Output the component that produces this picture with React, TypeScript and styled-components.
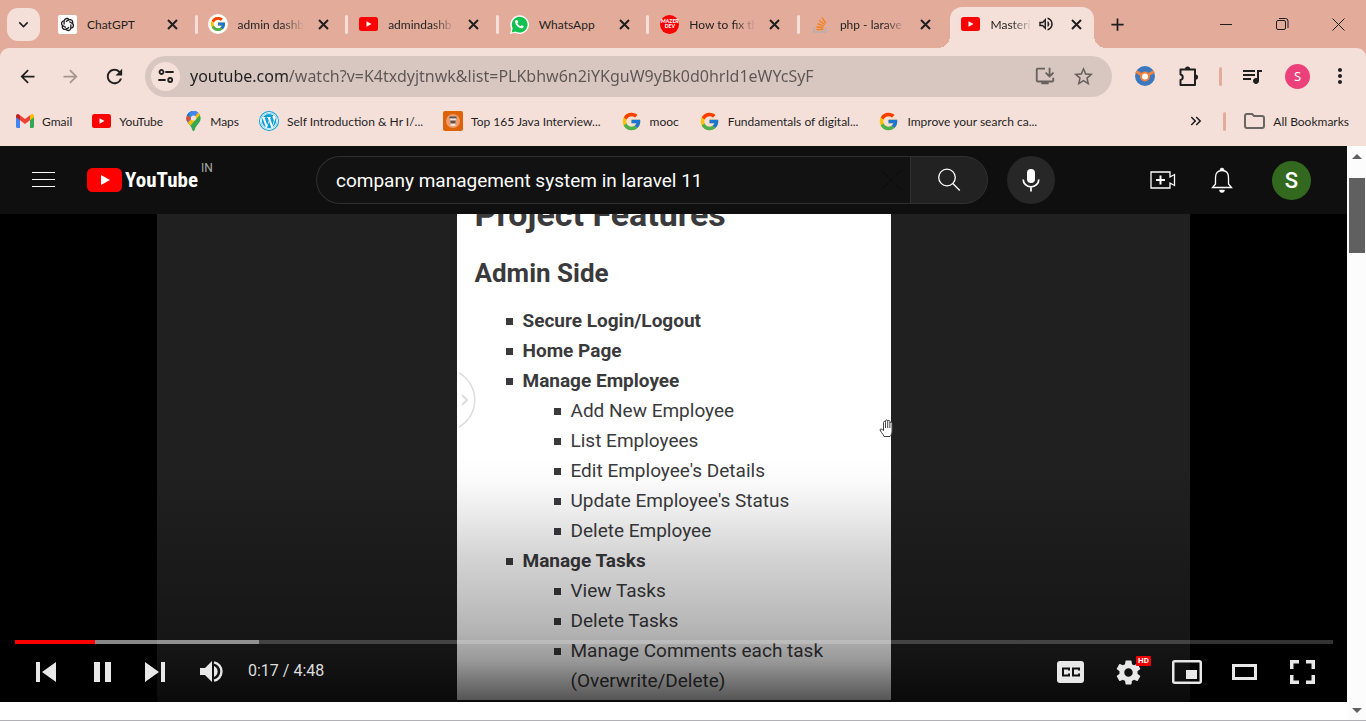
import React from 'react';
import styled, { createGlobalStyle, css } from 'styled-components';
import {
  MdArrowBack, MdArrowForward, MdRefresh, MdStarBorder, MdQueueMusic, MdMoreVert,
  MdKeyboardDoubleArrowRight, MdAdd, MdKeyboardArrowDown,
  MdOutlineInstallDesktop, MdOutlineVolumeUp,
} from 'react-icons/md';
import { FcGoogle } from 'react-icons/fc';
import { FaWordpress } from 'react-icons/fa';
import { RiOpenaiLine } from 'react-icons/ri';

const Global = createGlobalStyle`
  *, *::before, *::after { box-sizing: border-box; }
  body { margin: 0; background: #fff; font-family: Roboto, "Liberation Sans", sans-serif; }
  button { font: inherit; color: inherit; background: none; border: 0; padding: 0; margin: 0; cursor: pointer; }
  svg { display: block; flex: none; }
`;

const ui = css`font-family: "Noto Sans", "Open Sans", sans-serif;`;
const smallUi = css`
  font-family: Lato, "Open Sans", sans-serif;
  font-size: 12px;
`;
const center = css`display: flex; align-items: center; justify-content: center;`;

const Browser = styled.div`
  min-height: 100vh;
  display: flex;
  flex-direction: column;
  border-bottom: 1px solid #b1b1b5;
`;

/* ---------- tab strip ---------- */
const TabStrip = styled.header`
  ${smallUi}
  display: flex;
  align-items: center;
  height: 48px;
  padding-left: 7px;
  background: #e3ac9a;
  color: #1f1f1f;
`;
const TabSearch = styled.button`
  ${center}
  width: 33px;
  height: 33px;
  flex: none;
  margin-right: 5px;
  border-radius: 11px;
  background: #f5e0d9;
`;
const TabList = styled.nav`
  display: flex;
  flex: 0 1 1054px;
  min-width: 0;
  align-self: stretch;
`;
const Tab = styled.div<{ $divided?: boolean }>`
  position: relative;
  display: flex;
  align-items: center;
  gap: 10px;
  flex: 1 1 0;
  min-width: 0;
  padding: 0 14px 0 13px;
  ${p => p.$divided && css`
    &::after {
      content: "";
      position: absolute;
      right: -2px;
      top: 15px;
      width: 3px;
      height: 19px;
      border-radius: 2px;
      background: #f5e0d9;
    }
  `}
`;
const ActiveShape = styled.span`
  position: absolute;
  inset: 7px 5px 0 2px;
  border-radius: 12px 12px 0 0;
  background: #f5e0d9;
  &::before, &::after {
    content: "";
    position: absolute;
    bottom: 0;
    width: 12px;
    height: 12px;
  }
  &::before { right: 100%; background: radial-gradient(circle at 0 0, transparent 12px, #f5e0d9 12px); }
  &::after { left: 100%; background: radial-gradient(circle at 100% 0, transparent 12px, #f5e0d9 12px); }
`;
const TabIcon = styled.span`
  ${center}
  position: relative;
  width: 19px;
  height: 19px;
  flex: none;
`;
const TabTitle = styled.span<{ $fade?: boolean }>`
  position: relative;
  flex: 1 1 0;
  min-width: 0;
  overflow: hidden;
  white-space: nowrap;
  ${p => p.$fade && css`mask-image: linear-gradient(to right, #000 calc(100% - 22px), transparent);`}
`;
const TabButton = styled.button`
  ${center}
  position: relative;
  flex: none;
  width: 18px;
  height: 18px;
`;
const MuteButton = styled(TabButton)`
  margin: 0 2px 0 -6px;
`;
const NewTab = styled.button`
  ${center}
  width: 36px;
  height: 36px;
  flex: none;
`;
const WindowButtons = styled.div`
  display: flex;
  margin-left: auto;
`;
const WindowButton = styled.button`
  ${center}
  width: 56px;
  height: 48px;
`;

/* ---------- toolbar ---------- */
const ToolbarWrap = styled.div`background: #e3ac9a;`;
const Toolbar = styled.div`
  ${ui}
  display: flex;
  align-items: center;
  height: 56px;
  padding: 0 13px;
  border-radius: 9px 9px 0 0;
  background: #f5e0d9;
  color: #1f1f1f;
`;
const ToolButton = styled.button<{ $w?: number; $dim?: boolean }>`
  ${center}
  width: ${p => p.$w ?? 43}px;
  height: 36px;
  flex: none;
  color: ${p => (p.$dim ? '#a39691' : '#1f1f1f')};
`;
const Omnibox = styled.div`
  display: flex;
  align-items: center;
  flex: 1;
  min-width: 0;
  height: 41px;
  margin: 0 14px 0 16px;
  padding: 0 9px 0 6px;
  border-radius: 21px;
  background: #d8c6c0;
`;
const SiteInfo = styled.button`
  ${center}
  width: 29px;
  height: 29px;
  border-radius: 50%;
  background: #f5e0d9;
`;
const Address = styled.input`
  ${ui}
  flex: 1;
  min-width: 0;
  height: 26px;
  margin-left: 10px;
  padding: 0;
  border: 0;
  outline: 0;
  font-size: 16px;
  background: linear-gradient(to right, #1f1f1f 98px, #5e5654 98px);
  background-clip: text;
  -webkit-text-fill-color: transparent;
`;
const Divider = styled.span<{ $space: number }>`
  width: 3px;
  height: 19px;
  flex: none;
  margin: 0 ${p => p.$space}px;
  border-radius: 2px;
  background: #e3ac9a;
`;
const Profile = styled.button`
  ${center}
  width: 25px;
  height: 25px;
  flex: none;
  margin: 0 17px 0 9px;
  border-radius: 50%;
  background: #ec407a;
  color: #fff;
  font-size: 13px;
`;

const Bookmarks = styled.nav`
  ${smallUi}
  display: flex;
  align-items: center;
  gap: 20px;
  height: 42px;
  padding: 0 17px 8px 16px;
  background: #f5e0d9;
  color: #1f1f1f;
  white-space: nowrap;
`;
const Bookmark = styled.a`
  display: flex;
  align-items: center;
  gap: 8px;
  color: inherit;
  text-decoration: none;
`;
const BookmarksEnd = styled.div`
  display: flex;
  align-items: center;
  margin-left: auto;
`;

/* ---------- page ---------- */
const Viewport = styled.div`
  display: flex;
  flex: 1;
`;
const Page = styled.main`
  flex: 1;
  min-width: 0;
  background: #fff;
`;
const Scrollbar = styled.div`
  display: flex;
  flex-direction: column;
  align-items: center;
  width: 19px;
  padding: 8px 1px 7px 2px;
  background: #fcfcfc;
`;
const Thumb = styled.span`
  width: 16px;
  height: 75px;
  margin: 19px 0 auto;
  background: #606060;
`;
const Masthead = styled.header`
  display: flex;
  align-items: center;
  justify-content: space-between;
  height: 68px;
  padding: 0 36px 0 32px;
  background: #0f0f0f;
  color: #fff;
`;
const MastStart = styled.div`
  display: flex;
  align-items: center;
  gap: 32px;
  width: 189px;
`;
const Logo = styled.a`
  display: flex;
  align-items: center;
  gap: 3px;
  color: #fff;
  text-decoration: none;
`;
const Wordmark = styled.span`
  font-family: "Liberation Sans Narrow", "Roboto Condensed", "Open Sans Condensed", Roboto, sans-serif;
  font-weight: 700;
  font-size: 21px;
  line-height: 26px;
`;
const Country = styled.sup`
  align-self: flex-start;
  margin-top: -6px;
  font-size: 12px;
  line-height: 14px;
  color: #aaa;
`;
const MastCenter = styled.div`
  display: flex;
  flex: 0 1 739px;
  gap: 19px;
`;
const SearchForm = styled.form`
  display: flex;
  flex: 1;
  min-width: 0;
`;
const SearchBox = styled.label`
  display: flex;
  align-items: center;
  flex: 1;
  min-width: 0;
  height: 48px;
  padding: 0 8px 0 19px;
  border: 1px solid #303030;
  border-right: 0;
  border-radius: 24px 0 0 24px;
  background: #121212;
`;
const SearchInput = styled.input`
  flex: 1;
  min-width: 0;
  padding: 0;
  border: 0;
  outline: 0;
  background: none;
  color: #fff;
  font-family: Roboto, sans-serif;
  font-size: 19px;
`;
const SearchButton = styled.button`
  ${center}
  width: 78px;
  height: 48px;
  border: 1px solid #303030;
  border-radius: 0 24px 24px 0;
  background: #222;
`;
const Mic = styled.button`
  ${center}
  width: 48px;
  height: 48px;
  border-radius: 50%;
  background: #272727;
`;
const MastEnd = styled.div`
  display: flex;
  align-items: center;
  justify-content: space-between;
  width: 161px;
`;
const Bell = styled.button`padding-right: 4px;`;
const Avatar = styled.button`
  ${center}
  width: 39px;
  height: 39px;
  border-radius: 50%;
  background: #33691e;
  font-size: 22px;
  font-weight: 500;
`;

/* ---------- player ---------- */
const Player = styled.section`
  position: relative;
  overflow: hidden;
  display: flex;
  justify-content: center;
  background: #000;
`;
const Video = styled.div`
  display: flex;
  justify-content: center;
  width: 1033px;
  padding-bottom: 2px;
  background: #202020;
`;
const Slide = styled.article`
  position: relative;
  width: 434px;
  padding: 0 18px 4px;
  background: #fff;
  color: #3a3a3c;
`;
const SlideTitle = styled.h1`
  margin: -19px 0 24px;
  font-size: 34px;
  line-height: 38px;
  font-weight: 700;
`;
const SlideHeading = styled.h2`
  margin: 0 0 17px;
  font-size: 26px;
  line-height: 32px;
  font-weight: 700;
`;
const List = styled.ul<{ $nested?: boolean }>`
  margin: 0;
  padding: 0 0 0 ${p => (p.$nested ? 48 : 31)}px;
  list-style: none;
  font-size: 19px;
  line-height: 30px;
  white-space: nowrap;
  font-weight: ${p => (p.$nested ? 400 : 700)};
`;
const Item = styled.div`
  display: flex;
  gap: 10px;
  &::before {
    content: "";
    width: 7px;
    height: 7px;
    flex: none;
    margin-top: 12px;
    background: currentColor;
  }
`;
const ItemText = styled.span`white-space: pre-line;`;
const Drawer = styled.button`
  position: absolute;
  left: 2px;
  top: 156px;
  width: 20px;
  height: 60px;
`;
const Hand = styled.svg`
  position: absolute;
  right: -5px;
  top: 205px;
`;
const Shade = styled.div`
  position: absolute;
  inset: auto 0 0;
  height: 244px;
  background: linear-gradient(to bottom, rgba(0,0,0,0) 0%, rgba(0,0,0,.02) 10%, rgba(0,0,0,.09) 25%, rgba(0,0,0,.17) 40%, rgba(0,0,0,.24) 58%, rgba(0,0,0,.3) 72%, rgba(0,0,0,.4) 83%, rgba(0,0,0,.68) 100%);
`;
const Controls = styled.div`
  position: absolute;
  inset: auto 14px 0 15px;
  color: #e8e8e8;
`;
const Track = styled.div`
  display: flex;
  height: 4px;
  background: rgba(255,255,255,.2);
`;
const Segment = styled.span<{ $color: string }>`
  background: ${p => p.$color};
`;
const ControlRow = styled.div`
  display: flex;
  align-items: center;
  height: 58px;
  padding: 0 1px 2px 3px;
`;
const ControlButton = styled.button<{ $w: number }>`
  ${center}
  position: relative;
  width: ${p => p.$w}px;
  height: 52px;
`;
const Time = styled.span`
  margin: 0 auto 3px 6px;
  font-size: 16px;
  line-height: 20px;
  color: #ddd;
`;
const HD = styled.span`
  position: absolute;
  left: 37px;
  top: 10px;
  padding: 0 2px;
  border-radius: 1px;
  background: #e00;
  color: #fff;
  font-size: 8px;
  line-height: 10px;
  font-weight: 700;
`;

/* ---------- drawings ---------- */
const YtIcon = ({ w = 19 }: { w?: number }) => (
  <svg width={w} height={w * 14 / 19} viewBox="0 0 38 28">
    <rect width="38" height="28" rx="5" fill="#f00" />
    <path d="M15 8.500v11l10-5.500z" fill="#fff" />
  </svg>
);
const OpenAi = () => (
  <svg width="19" height="19" viewBox="0 0 19 19">
    <rect width="19" height="19" rx="2" fill="#fff" />
    <g transform="translate(1.500 1.500)"><RiOpenaiLine size={16} color="#222" /></g>
  </svg>
);
const GoogleDisc = () => (
  <svg width="20" height="20" viewBox="0 0 20 20"><circle cx="10" cy="10" r="10" fill="#fff" /><g transform="translate(1.500 1.500)"><FcGoogle size={17} /></g></svg>
);
const WhatsApp = () => (
  <svg width="19" height="19" viewBox="0 0 19 19">
    <path d="M0 19l1.400-5A9.300 9.300 0 1 1 5 17.700z" fill="#fff" />
    <path d="M1.600 17.400l1.100-4A7.900 7.900 0 1 1 5.500 16.400z" fill="#12c150" />
    <path d="M6.200 5c-.7.3-1.300 1.200-1.100 2.300.5 2.800 3.300 5.700 6.300 6 1.100.1 2.300-.6 2.400-2l-2.100-1.100-1.100 1.100c-1.400-.5-2.500-1.600-3.200-3l.9-1L7.300 5z" fill="#fff" />
  </svg>
);
const MazerText = styled.span`
  ${center}
  flex-direction: column;
  width: 19px;
  height: 19px;
  border-radius: 50%;
  background: #f00;
  color: #fff;
  font-size: 5px;
  line-height: 5px;
  font-weight: 900;
`;
const Stack = () => (
  <svg width="15" height="17" viewBox="0 0 15 17" fill="none">
    <path d="M1 11v5h11.500v-5" stroke="#b5b0ae" strokeWidth="1.600" />
    <path d="M3.300 13.400h7M3.500 10.700l6.900 1M4.300 7.600l6.500 2.500M6.200 4.500l5.500 4.200M9 1.700l3.800 5.700" stroke="#f48024" strokeWidth="1.500" />
  </svg>
);
const TabClose = () => (
  <svg width="11" height="11" viewBox="0 0 11 11"><path d="M1 1l9 9M10 1l-9 9" stroke="#1f1f1f" strokeWidth="2" /></svg>
);
const Gmail = () => (
  <svg width="18" height="14" viewBox="0 0 18 14">
    <path d="M0 2v10.800c0 .7.500 1.200 1.200 1.200H4V5.500z" fill="#4285f4" />
    <path d="M18 2v10.800c0 .7-.5 1.200-1.200 1.200H14V5.500z" fill="#34a853" />
    <path d="M14 1.300v4.900l4-3V2c0-1.700-1.700-2.400-2.800-1.600z" fill="#fbbc04" />
    <path d="M4 6.200V1.300L9 5l5-3.700v4.900L9 10z" fill="#ea4335" />
    <path d="M0 2v1.200l4 3V1.300L2.800.4C1.700-.4 0 .3 0 2z" fill="#c5221f" />
  </svg>
);
const Maps = () => (
  <svg width="19" height="20" viewBox="-3 0 19 20">
    <defs><clipPath id="pin"><path d="M7.500 0A7.200 7.200 0 0 0 .3 7.200c0 4.600 4.400 6.300 5.900 11.300.3 1 .7 1.500 1.300 1.500s1-.5 1.300-1.500c1.500-5 5.900-6.700 5.900-11.300A7.200 7.200 0 0 0 7.500 0z" /></clipPath></defs>
    <g clipPath="url(#pin)">
      <rect width="15" height="20" fill="#34a853" />
      <path d="M-2 12L12 -3V3L2 15z" fill="#4285f4" />
      <path d="M0 0h7L2.500 6 0 4z" fill="#1a73e8" />
      <path d="M-1 2.500L5 7.500 0 12z" fill="#ea4335" />
      <path d="M1 12.500L14 -1v5L4 15z" fill="#fbbc04" />
      <path d="M5.500 0h8L8 6.500 3 3z" fill="#4285f4" />
    </g>
    <circle cx="7.500" cy="7" r="2.600" fill="#f5e0d9" />
  </svg>
);
const Wordpress = () => (
  <svg width="20" height="20" viewBox="0 0 20 20">
    <circle cx="10" cy="10" r="10" fill="#0a9fd8" /><circle cx="10" cy="10" r="9" fill="#fff" />
    <g transform="translate(1.500 1.500)"><FaWordpress size={17} color="#0a9fd8" /></g>
  </svg>
);
const JavaCup = () => (
  <svg width="20" height="20" viewBox="0 0 20 20">
    <rect width="20" height="20" rx="2" fill="#dd6208" /><circle cx="10" cy="10" r="7" fill="#ee9b6c" />
    <path d="M6.500 5.500h7v2h-7z" fill="#4c5660" /><path d="M7 7.500h6l-.7 7.500H7.700z" fill="#e9e4e0" /><path d="M7.200 9.500h5.600l-.3 3h-5z" fill="#6d4c41" />
  </svg>
);
const Tune = () => (
  <svg width="16" height="14" viewBox="0 0 16 14" fill="none" stroke="#1f1f1f" strokeWidth="1.800">
    <circle cx="3.500" cy="3" r="2" /><path d="M8 3h7M1 11h6" strokeLinecap="round" /><circle cx="12.200" cy="11" r="2" />
  </svg>
);
const Extension = () => (
  <svg width="20" height="20" viewBox="0 0 20 20">
    <circle cx="10" cy="10" r="10" fill="#3c78c0" /><path d="M1 5.500l6 3.500M19 5.500l-6 3.500" stroke="#f0823c" strokeWidth="3" />
    <circle cx="10" cy="10.500" r="5" fill="#f0823c" /><circle cx="10" cy="10.500" r="3" fill="#fff" />
  </svg>
);
const Puzzle = () => (
  <svg width="21" height="21" viewBox="0 0 21 21">
    <path d="M2.500 3.500h14.500v15.500h-14.500v-5c3-.5 3-5 0-5.500z" fill="none" stroke="#1f1f1f" strokeWidth="2" strokeLinejoin="round" />
    <path d="M7 3a2.600 2.600 0 0 1 5.200 0zM17.500 8.500a2.600 2.600 0 0 1 0 5.200z" fill="#1f1f1f" />
  </svg>
);
const Gear = () => (
  <svg width="29" height="29" viewBox="0 0 24 24" fill="currentColor">
    <path d="M19.430 12.980c.04-.32.07-.64.07-.98s-.03-.66-.07-.98l2.110-1.650c.19-.15.24-.42.12-.64l-2-3.460c-.12-.22-.39-.3-.61-.22l-2.490 1c-.52-.4-1.080-.73-1.690-.98l-.38-2.650C14.460 2.180 14.250 2 14 2h-4c-.25 0-.46.18-.49.42l-.38 2.650c-.61.25-1.170.59-1.690.98l-2.490-1c-.23-.09-.49 0-.61.22l-2 3.460c-.13.22-.07.49.12.64l2.110 1.650c-.04.32-.07.65-.07.98s.03.66.07.98l-2.110 1.650c-.19.15-.24.42-.12.64l2 3.460c.12.22.39.3.61.22l2.490-1c.52.4 1.080.73 1.690.98l.38 2.650c.03.24.24.42.49.42h4c.25 0 .46-.18.49-.42l.38-2.650c.61-.25 1.170-.59 1.690-.98l2.490 1c.23.09.49 0 .61-.22l2-3.460c.12-.22.07-.49-.12-.64l-2.110-1.650zM12 15.500c-1.930 0-3.500-1.570-3.500-3.500s1.570-3.500 3.500-3.500 3.500 1.570 3.500 3.500-1.570 3.500-3.500 3.500z" />
  </svg>
);

const tabs = [
  { icon: <OpenAi />, title: 'ChatGPT' },
  { icon: <GoogleDisc />, title: 'admin dashb', fade: true },
  { icon: <YtIcon />, title: 'admindashb', fade: true },
  { icon: <WhatsApp />, title: 'WhatsApp' },
  { icon: <MazerText><span>MAZER</span><span>DEV</span></MazerText>, title: 'How to fix th', fade: true },
  { icon: <Stack />, title: 'php - larave', fade: true },
  { icon: <YtIcon />, title: 'Masteri', fade: true, active: true },
];

const bookmarks = [
  { icon: <Gmail />, label: 'Gmail' },
  { icon: <YtIcon />, label: 'YouTube' },
  { icon: <Maps />, label: 'Maps' },
  { icon: <Wordpress />, label: 'Self Introduction & Hr I/...' },
  { icon: <JavaCup />, label: 'Top 165 Java Interview...' },
  { icon: <FcGoogle size={21} />, label: 'mooc' },
  { icon: <FcGoogle size={21} />, label: 'Fundamentals of digital...' },
  { icon: <FcGoogle size={21} />, label: 'Improve your search ca...' },
];

const features: { name: string; sub?: string[] }[] = [
  { name: 'Secure Login/Logout' },
  { name: 'Home Page' },
  { name: 'Manage Employee', sub: ['Add New Employee', 'List Employees', "Edit Employee's Details", "Update Employee's Status", 'Delete Employee'] },
  { name: 'Manage Tasks', sub: ['View Tasks', 'Delete Tasks', 'Manage Comments each task\n(Overwrite/Delete)'] },
];

const played = 17 / 288;

export default function App() {
  return (
    <Browser>
      <Global />
      <TabStrip>
        <TabSearch aria-label="Search tabs"><MdKeyboardArrowDown size={19} /></TabSearch>
        <TabList>
          {tabs.map((t, i) => (
            <Tab key={t.title} $divided={i < tabs.length - 2}>
              {t.active && <ActiveShape />}
              <TabIcon>{t.icon}</TabIcon>
              <TabTitle $fade={t.fade}>{t.title}</TabTitle>
              {t.active && <MuteButton aria-label="Mute tab"><MdOutlineVolumeUp size={18} /></MuteButton>}
              <TabButton aria-label="Close tab"><TabClose /></TabButton>
            </Tab>
          ))}
        </TabList>
        <NewTab aria-label="New tab"><MdAdd size={21} /></NewTab>
        <WindowButtons>
          <WindowButton aria-label="Minimize"><svg width="12" height="12"><path d="M0 6.500h12" stroke="#1f1f1f" /></svg></WindowButton>
          <WindowButton aria-label="Restore">
            <svg width="13" height="13" fill="none" stroke="#1f1f1f"><rect x=".5" y="2.500" width="9" height="9" rx="1.500" /><path d="M3 .5h6.500a2.500 2.500 0 0 1 2.500 2.500v7" /></svg>
          </WindowButton>
          <WindowButton aria-label="Close"><svg width="13" height="13"><path d="M.5 .5l12 12M12.500 .5l-12 12" stroke="#1f1f1f" /></svg></WindowButton>
        </WindowButtons>
      </TabStrip>

      <ToolbarWrap>
        <Toolbar>
          <ToolButton $w={28} aria-label="Back"><MdArrowBack size={21} /></ToolButton>
          <ToolButton $w={58} $dim aria-label="Forward"><MdArrowForward size={21} /></ToolButton>
          <ToolButton $w={30} aria-label="Reload"><MdRefresh size={23} /></ToolButton>
          <Omnibox>
            <SiteInfo aria-label="Site information"><Tune /></SiteInfo>
            <Address aria-label="Address" defaultValue="youtube.com/watch?v=K4txdyjtnwk&list=PLKbhw6n2iYKguW9yBk0d0hrld1eWYcSyF" />
            <ToolButton $w={39} aria-label="Install app"><MdOutlineInstallDesktop size={22} color="#6a615e" /></ToolButton>
            <ToolButton $w={39} aria-label="Bookmark this page"><MdStarBorder size={23} color="#6a615e" /></ToolButton>
          </Omnibox>
          <ToolButton $w={38} aria-label="Extension"><Extension /></ToolButton>
          <ToolButton $w={49} aria-label="Extensions"><Puzzle /></ToolButton>
          <Divider $space={6} />
          <ToolButton $w={48} aria-label="Media controls"><MdQueueMusic size={24} /></ToolButton>
          <Profile aria-label="Profile">S</Profile>
          <ToolButton $w={26} aria-label="Menu"><MdMoreVert size={24} /></ToolButton>
        </Toolbar>
        <Bookmarks>
          {bookmarks.map(b => <Bookmark href="#" key={b.label}>{b.icon}{b.label}</Bookmark>)}
          <BookmarksEnd>
            <ToolButton $w={18} aria-label="More bookmarks"><MdKeyboardDoubleArrowRight size={18} /></ToolButton>
            <Divider $space={18} />
            <Bookmark href="#">
              <svg width="21" height="16" fill="none" stroke="#6a6462" strokeWidth="2"><path d="M1 3a2 2 0 0 1 2-2h5l2 2h8a2 2 0 0 1 2 2v8a2 2 0 0 1-2 2H3a2 2 0 0 1-2-2z" /></svg>
              All Bookmarks
            </Bookmark>
          </BookmarksEnd>
        </Bookmarks>
      </ToolbarWrap>

      <Viewport>
        <Page>
          <Masthead>
            <MastStart>
              <button aria-label="Guide"><svg width="23" height="18"><path d="M0 1.500h23M0 8.500h23M0 15.500h23" stroke="#fff" strokeWidth="1.200" /></svg></button>
              <Logo href="#">
                <svg width="35" height="24" viewBox="0 0 35 24"><rect width="35" height="24" rx="5.500" fill="#f00" /><path d="M14 7v10l9-5z" fill="#fff" /></svg>
                <Wordmark>YouTube</Wordmark>
                <Country>IN</Country>
              </Logo>
            </MastStart>
            <MastCenter>
              <SearchForm onSubmit={e => e.preventDefault()}>
                <SearchBox>
                  <SearchInput aria-label="Search" defaultValue="company management system in laravel 11" />
                  <svg width="22" height="22"><path d="M1 1l20 20M21 1L1 21" stroke="#0b0b0b" /></svg>
                </SearchBox>
                <SearchButton aria-label="Search">
                  <svg width="24" height="24" fill="none" stroke="#fff" strokeWidth="1.300"><circle cx="10" cy="9.500" r="8.300" /><path d="M15.800 15.500l7 7" /></svg>
                </SearchButton>
              </SearchForm>
              <Mic aria-label="Search with your voice">
                <svg width="18" height="24"><rect x="5" y="1" width="8" height="14" rx="4" fill="#fff" /><path d="M1.200 11.500a7.800 7.300 0 0 0 15.600 0M9 18.500v5" fill="none" stroke="#fff" strokeWidth="1.700" /></svg>
              </Mic>
            </MastCenter>
            <MastEnd>
              <button aria-label="Create">
                <svg width="26" height="18" fill="none" stroke="#fff" strokeWidth="1.300"><path d="M1 1h19v5l4.500-2.500v11L20 12v5H1z" /><path d="M10.500 4.500v9M6 9h9" strokeWidth="2" /></svg>
              </button>
              <Bell aria-label="Notifications">
                <svg width="22" height="26" fill="none" stroke="#fff" strokeWidth="1.300"><path d="M4.500 17V10.500C4.500 6 7 3.500 11 3.500s6.500 2.500 6.500 7V17l3 3.500h-19z" /><path d="M9 3a2 2 0 0 1 4 0zM8.500 23h5a2.500 2.500 0 0 1-5 0z" fill="#fff" strokeWidth=".5" /></svg>
              </Bell>
              <Avatar aria-label="Account">S</Avatar>
            </MastEnd>
          </Masthead>

          <Player>
            <Video>
              <Slide>
                <SlideTitle>Project Features</SlideTitle>
                <SlideHeading>Admin Side</SlideHeading>
                <List>
                  {features.map(f => (
                    <li key={f.name}>
                      <Item>{f.name}</Item>
                      {f.sub && <List $nested>{f.sub.map(s => <li key={s}><Item><ItemText>{s}</ItemText></Item></li>)}</List>}
                    </li>
                  ))}
                </List>
                <Drawer aria-label="Open panel">
                  <svg width="20" height="60" fill="none" stroke="#ddd" strokeWidth="1.500"><path d="M0 3a31 31 0 0 1 0 54" /><path d="M3 25l5 5-5 5" strokeWidth="2" /></svg>
                </Drawer>
                <Hand width="17" height="19" viewBox="0 0 17 19" fill="#fff" stroke="#444" strokeWidth="1">
                  <path d="M5 17.500C4 14.500 1 12.500 1 10.500c1-1 2.500 0 3.500 1V3.500c0-1.500 2-1.500 2 0V2c0-1.500 2.200-1.500 2.200 0v.5c0-1.500 2.200-1.500 2.200 0V4c0-1.200 2.100-1.200 2.100 0v8c0 3-1 4-2 5.500z" />
                  <path d="M6.500 3.500V9M8.700 2.500V9M10.900 3.500V9" />
                </Hand>
              </Slide>
            </Video>
            <Shade />
            <Controls>
              <Track role="progressbar" aria-label="Seek">
                <Segment $color="#f00" style={{ width: `${(played + 0.002) * 100}%` }} />
                <Segment $color="rgba(255,255,255,.42)" style={{ width: '12.4%' }} />
              </Track>
              <ControlRow>
                <ControlButton $w={56} aria-label="Previous"><svg width="20" height="20" fill="currentColor"><path d="M0 0h4v20H0zM20 0v20L6 10z" /></svg></ControlButton>
                <ControlButton $w={56} aria-label="Pause"><svg width="17" height="20" fill="currentColor"><path d="M0 0h6v20H0zM11 0h6v20h-6z" /></svg></ControlButton>
                <ControlButton $w={50} aria-label="Next"><svg width="20" height="20" fill="currentColor"><path d="M16 0h4v20h-4zM0 0v20l14-10z" /></svg></ControlButton>
                <ControlButton $w={62} aria-label="Mute">
                  <svg width="23" height="22" fill="currentColor"><path d="M0 7h5l7-7v21l-7-7H0z" /><path d="M14 5a6 6 0 0 1 0 11z" /><path d="M14 1.300a9.400 9.400 0 0 1 0 18.400" fill="none" stroke="currentColor" strokeWidth="2.400" /></svg>
                </ControlButton>
                <Time>0:17 / 4:48</Time>
                <ControlButton $w={58} aria-label="Subtitles">
                  <svg width="27" height="22"><rect width="27" height="22" rx="3" fill="currentColor" /><path d="M12 9.500V7.500H6v7h6v-2M22 9.500V7.500h-6v7h6v-2" fill="none" stroke="#111" strokeWidth="2" /></svg>
                </ControlButton>
                <ControlButton $w={58} aria-label="Settings"><Gear /><HD>HD</HD></ControlButton>
                <ControlButton $w={59} aria-label="Miniplayer">
                  <svg width="30" height="24"><rect x="1.250" y="1.250" width="27.500" height="21.500" rx="1.500" fill="none" stroke="currentColor" strokeWidth="2.500" /><rect x="14" y="10" width="11" height="9" fill="currentColor" /></svg>
                </ControlButton>
                <ControlButton $w={57} aria-label="Theater mode"><svg width="25" height="16"><rect x="1.500" y="1.500" width="22" height="13" fill="none" stroke="currentColor" strokeWidth="3" /></svg></ControlButton>
                <ControlButton $w={59} aria-label="Full screen"><svg width="25" height="24" fill="none" stroke="currentColor" strokeWidth="3.500"><path d="M1.750 9V1.750H9M16 1.750h7.250V9M23.250 15v7.250H16M9 22.250H1.750V15" /></svg></ControlButton>
              </ControlRow>
            </Controls>
          </Player>
        </Page>
        <Scrollbar>
          <svg width="10" height="5"><path d="M0 5l5-5 5 5z" fill="#606060" /></svg>
          <Thumb />
          <svg width="10" height="5"><path d="M0 0l5 5 5-5z" fill="#606060" /></svg>
        </Scrollbar>
      </Viewport>
    </Browser>
  );
}
